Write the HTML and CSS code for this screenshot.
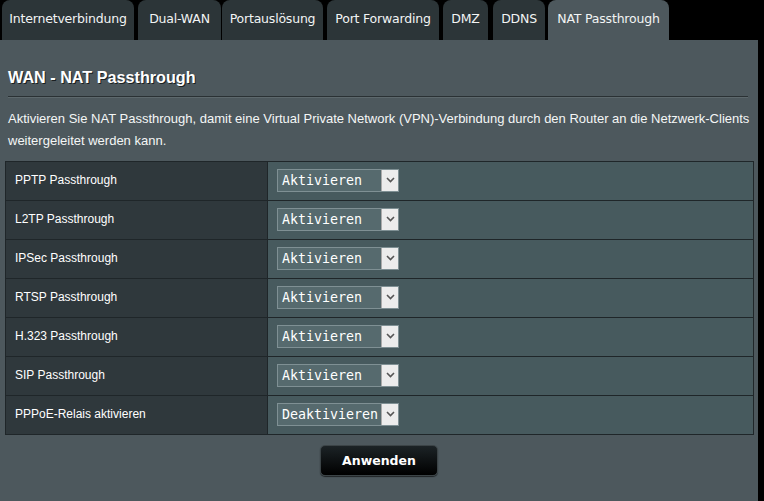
FILE: index.html
```html
<!DOCTYPE html>
<html lang="de">
<head>
<meta charset="utf-8">
<link rel="stylesheet" href="styles.css">
</head>
<body>
<div class="page">
  <div class="tabs">
    <div class="tab t1">Internetverbindung</div>
    <div class="tab t2">Dual-WAN</div>
    <div class="tab t3">Portauslösung</div>
    <div class="tab t4">Port Forwarding</div>
    <div class="tab t5">DMZ</div>
    <div class="tab t6">DDNS</div>
    <div class="tab active">NAT Passthrough</div>
  </div>
  <div class="panel">
    <h1 class="title">WAN - NAT Passthrough</h1>
    <div class="rule"></div>
    <p class="desc">Aktivieren Sie NAT Passthrough, damit eine Virtual Private Network (VPN)-Verbindung durch den Router an die Netzwerk-Clients weitergeleitet werden kann.</p>
    <table class="grid">
      <tr><th>PPTP Passthrough</th><td><span class="sel"><span class="val">Aktivieren</span><span class="arr"><svg width="9" height="6" viewBox="0 0 9 6"><path d="M1 1 L4.5 4.5 L8 1" fill="none" stroke="#555" stroke-width="1.6"/></svg></span></span></td></tr>
      <tr><th>L2TP Passthrough</th><td><span class="sel"><span class="val">Aktivieren</span><span class="arr"><svg width="9" height="6" viewBox="0 0 9 6"><path d="M1 1 L4.5 4.5 L8 1" fill="none" stroke="#555" stroke-width="1.6"/></svg></span></span></td></tr>
      <tr><th>IPSec Passthrough</th><td><span class="sel"><span class="val">Aktivieren</span><span class="arr"><svg width="9" height="6" viewBox="0 0 9 6"><path d="M1 1 L4.5 4.5 L8 1" fill="none" stroke="#555" stroke-width="1.6"/></svg></span></span></td></tr>
      <tr><th>RTSP Passthrough</th><td><span class="sel"><span class="val">Aktivieren</span><span class="arr"><svg width="9" height="6" viewBox="0 0 9 6"><path d="M1 1 L4.5 4.5 L8 1" fill="none" stroke="#555" stroke-width="1.6"/></svg></span></span></td></tr>
      <tr><th>H.323 Passthrough</th><td><span class="sel"><span class="val">Aktivieren</span><span class="arr"><svg width="9" height="6" viewBox="0 0 9 6"><path d="M1 1 L4.5 4.5 L8 1" fill="none" stroke="#555" stroke-width="1.6"/></svg></span></span></td></tr>
      <tr><th>SIP Passthrough</th><td><span class="sel"><span class="val">Aktivieren</span><span class="arr"><svg width="9" height="6" viewBox="0 0 9 6"><path d="M1 1 L4.5 4.5 L8 1" fill="none" stroke="#555" stroke-width="1.6"/></svg></span></span></td></tr>
      <tr><th>PPPoE-Relais aktivieren</th><td><span class="sel"><span class="val">Deaktivieren</span><span class="arr"><svg width="9" height="6" viewBox="0 0 9 6"><path d="M1 1 L4.5 4.5 L8 1" fill="none" stroke="#555" stroke-width="1.6"/></svg></span></span></td></tr>
    </table>
    <div class="actions"><button class="apply">Anwenden</button></div>
  </div>
</div>
</body>
</html>
```

FILE: styles.css
```css
html, body {
  margin: 0;
  padding: 0;
  background: #000;
  width: 764px;
  height: 501px;
  overflow: hidden;
}
.page {
  width: 764px;
  height: 501px;
  display: flex;
  flex-direction: column;
}
.tabs {
  display: flex;
  height: 40px;
  padding-left: 2px;
  gap: 4px;
  align-items: flex-end;
}
.tab {
  height: 40px;
  box-sizing: border-box;
  background: #2c3538;
  border-radius: 8px 8px 0 0;
  color: #f2f4f4;
  font-family: "DejaVu Sans", Verdana, sans-serif;
  font-size: 12.5px;
  line-height: 38px;
  text-align: center;
  letter-spacing: -0.2px;
  white-space: nowrap;
}
.t1 { width: 132px; }
.t2 { width: 83px; margin-left: 0; }
.t3 { width: 101px; margin-left: -3px; }
.t4 { width: 112px; }
.t5 { width: 45px; }
.t6 { width: 52px; margin-left: 1px; }
.active {
  width: 121px;
  margin-left: -1px;
  background: #4d585d;
}
.panel {
  width: 758px;
  flex: 1;
  background: #4d585d;
  box-sizing: border-box;
  padding: 0 5px 0 5px;
}
.title {
  margin: 27px 0 0 3px;
  font-family: "Liberation Sans", Arial, sans-serif;
  font-size: 16.2px;
  font-weight: bold;
  color: #ffffff;
  text-shadow: 1px 1px 0 #1a1f21;
  line-height: 20px;
}
.rule {
  margin: 9px 5px 0 3px;
  height: 1px;
  background: #2a3134;
  border-bottom: 1px solid #5d686c;
}
.desc {
  margin: 10px 0 0 3px;
  font-family: "Liberation Sans", Arial, sans-serif;
  font-size: 13px;
  line-height: 22px;
  color: #f4f6f6;
}
.grid {
  margin-top: 9px;
  width: 749px;
  border-collapse: collapse;
  border: 1px solid #1f2629;
}
.grid th, .grid td {
  height: 36px;
  padding: 0 0 2px 0;
  border: 1px solid #1f2629;
  border-left: none;
  border-right: none;
}
.grid th {
  width: 262px;
  background: #2f383c;
  text-align: left;
  font-family: "Liberation Sans", Arial, sans-serif;
  font-size: 12px;
  font-weight: normal;
  color: #ffffff;
  padding-left: 9px;
  box-sizing: border-box;
}
.grid td {
  background: #475a5e;
  padding-left: 9px;
  border-left: 1px solid #1f2629;
}
.sel {
  display: inline-flex;
  width: 122px;
  height: 23px;
  box-sizing: border-box;
  border: 1px solid #7f9094;
  background: #566a6e;
  vertical-align: middle;
}
.val {
  flex: 1;
  font-family: "DejaVu Sans Mono", "Lucida Console", monospace;
  font-size: 13.3px;
  color: #ffffff;
  line-height: 21px;
  padding-left: 4px;
  white-space: nowrap;
  overflow: hidden;
}
.arr {
  width: 16px;
  flex: none;
  background: #ececec;
  display: flex;
  align-items: center;
  justify-content: center;
  border-left: 1px solid #aaa;
}
.actions {
  display: flex;
  justify-content: center;
  padding-top: 10px;
}
.apply {
  width: 118px;
  height: 31px;
  border-radius: 5px;
  border: 1px solid #3c4447;
  background: linear-gradient(#1c2326, #000000);
  color: #ffffff;
  font-family: "DejaVu Sans", Verdana, sans-serif;
  font-weight: bold;
  font-size: 12.5px;
  box-shadow: 0 1px 1px rgba(0,0,0,0.6);
}
```
